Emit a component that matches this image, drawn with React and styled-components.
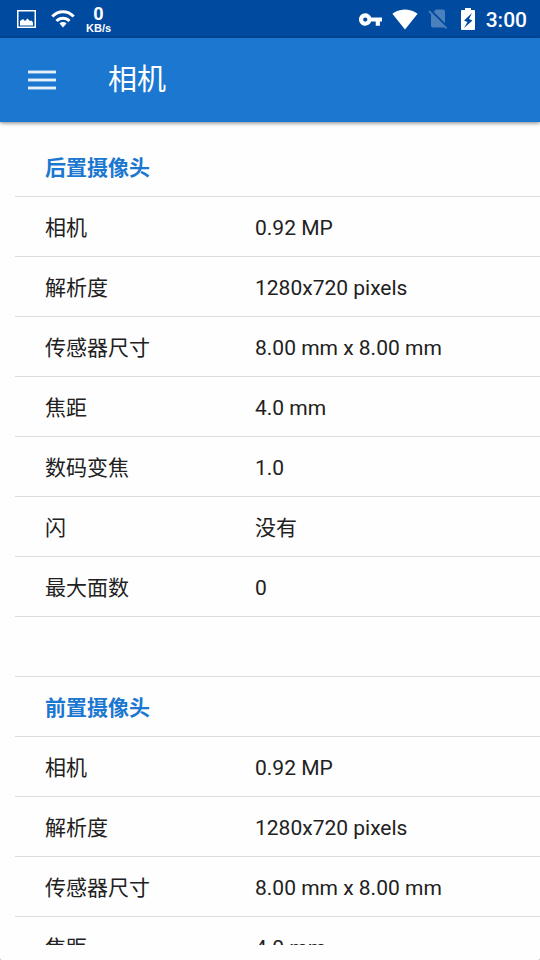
import React from "react";
import styled, { createGlobalStyle } from "styled-components";

const GlobalStyle = createGlobalStyle`
  * { box-sizing: border-box; }
  body {
    margin: 0;
    background: #b5b5b5;
    color: #212121;
    font-family: Roboto, "Noto Sans CJK SC", sans-serif;
  }
`;

const Screen = styled.div`
  display: flex;
  flex-direction: column;
  height: 100vh;
  background: #fefefe;
  border-radius: 0 0 2px 2px;
  overflow: hidden;
`;

const StatusBar = styled.div`
  display: flex;
  flex: none;
  align-items: center;
  justify-content: space-between;
  height: 38px;
  padding: 0 13px 0 17px;
  background: #004a9f;
  color: #fff;
`;

const StatusGroup = styled.div`
  display: flex;
  align-items: center;
  gap: ${(p) => p.$gap}px;
`;

const StatusIcon = styled.svg`
  display: block;
  flex: none;
  fill: ${(p) => (p.$dim ? "#4c80bc" : "#fff")};
`;

const Speed = styled.div`
  display: flex;
  flex-direction: column;
  align-items: center;
  padding-top: 1px;
  font-family: Roboto, sans-serif;
  font-weight: 700;
`;

const SpeedValue = styled.span`
  font-size: 18px;
  line-height: 16px;
`;

const SpeedUnit = styled.span`
  font-family: "Liberation Sans", sans-serif;
  font-size: 11px;
  line-height: 12px;
`;

const Clock = styled.time`
  padding-top: 2px;
  font-size: 21px;
  font-weight: 500;
  line-height: 24px;
`;

const AppBar = styled.header`
  display: flex;
  flex: none;
  align-items: center;
  gap: 52px;
  height: 84px;
  padding: 0 28px;
  background: #1b77d0;
  box-shadow: 0 1px 4px rgba(0, 0, 0, 0.5);
`;

const MenuButton = styled.button`
  display: block;
  padding: 0;
  border: 0;
  background: none;
  cursor: pointer;

  svg {
    display: block;
    fill: #e4effa;
  }
`;

const Title = styled.h1`
  margin: 0;
  color: #fff;
  font-size: 29px;
  font-weight: 400;
  line-height: 44px;
`;

const Main = styled.main`
  display: flex;
  flex: 1;
  flex-direction: column;
  min-height: 0;
  padding: 15px 0 15px 15px;
`;

const Scroller = styled.div`
  flex: 1;
  min-height: 0;
  overflow-y: auto;
  scrollbar-width: none;
`;

const Table = styled.table`
  width: 100%;
  table-layout: fixed;
  border-collapse: separate;
  border-spacing: 0;
  font-size: 21px;
  line-height: 30px;
  text-align: left;
`;

const LabelColumn = styled.col`
  width: 240px;
`;

const Cell = styled.td`
  height: 60px;
  padding: 3px 0 0;
  border-bottom: 1px solid #dcdcdc;
`;

const LabelCell = styled(Cell)`
  padding-left: 30px;
  font-weight: 400;
`;

const SectionCell = styled(LabelCell)`
  color: #1b77d0;
  font-weight: 700;
`;

const specs = [
  ["相机", "0.92 MP"],
  ["解析度", "1280x720 pixels"],
  ["传感器尺寸", "8.00 mm x 8.00 mm"],
  ["焦距", "4.0 mm"],
  ["数码变焦", "1.0"],
  ["闪", "没有"],
  ["最大面数", "0"],
];

const cameras = [
  { name: "后置摄像头", specs },
  { name: "前置摄像头", specs },
];

function CameraSection({ camera, last }) {
  return (
    <tbody>
      <tr>
        <SectionCell as="th" colSpan={2} scope="rowgroup">{camera.name}</SectionCell>
      </tr>
      {camera.specs.map(([label, value]) => (
        <tr key={label}>
          <LabelCell as="th" scope="row">{label}</LabelCell>
          <Cell>{value}</Cell>
        </tr>
      ))}
      {!last && (
        <tr>
          <Cell colSpan={2} />
        </tr>
      )}
    </tbody>
  );
}

export default function App() {
  return (
    <Screen>
      <GlobalStyle />
      <StatusBar>
        <StatusGroup $gap={11}>
          <StatusIcon width="23" height="18" viewBox="0 0 23 18" aria-hidden="true">
            <path fillRule="evenodd" d="M0 0h19v18H0zM1.500 1.500v15h16v-15z" />
            <path d="M3 15.500V11l3-2L8 11l2.500-2.500L13 11l1.500-.5L16 12.500v3z" />
          </StatusIcon>
          <StatusIcon width="24" height="18" viewBox="0 0 24 18" aria-hidden="true">
            <g fill="none" stroke="#fff" strokeWidth="3">
              <path d="M1.300 6.500C7.500.2 16.500.2 22.700 6.500" />
              <path d="M5.500 11c3.800-3.800 9.200-3.800 13 0" />
            </g>
            <path d="M8.500 13.500c2-1.900 5-1.900 7 0L12 17.500z" />
          </StatusIcon>
          <Speed>
            <SpeedValue>0</SpeedValue>
            <SpeedUnit>KB/s</SpeedUnit>
          </Speed>
        </StatusGroup>
        <StatusGroup $gap={10}>
          <StatusIcon width="23" height="13" viewBox="1 6 22 12" aria-hidden="true">
            <path d="M12.650 10C11.830 7.670 9.610 6 7 6c-3.310 0-6 2.690-6 6s2.690 6 6 6c2.610 0 4.830-1.670 5.650-4H17v4h4v-4h2v-4H12.650zM7 14c-1.100 0-2-.9-2-2s.9-2 2-2 2 .9 2 2-.9 2-2 2z" />
          </StatusIcon>
          <StatusIcon width="26" height="21" viewBox="0 3 24 18.500" aria-hidden="true">
            <path d="M12.010 21.490 23.640 7c-.45-.34-4.930-4-11.640-4C5.280 3 .81 6.660.36 7l11.630 14.490.01.01z" />
          </StatusIcon>
          <StatusIcon $dim width="22" height="21" viewBox="2 3 22 20" aria-hidden="true">
            <path d="M18.990 5c0-1.100-.89-2-1.990-2h-7L7.660 5.340 19 16.680zM3.650 3.880 2.380 5.150 5 7.770V19c0 1.100.9 2 2 2h10.010c.35 0 .67-.1.960-.26l1.880 1.880 1.270-1.270z" />
          </StatusIcon>
          <StatusIcon width="16" height="22" viewBox="-1 0 16 22" aria-hidden="true">
            <path fillRule="evenodd" d="M4 0h6v2h3a1 1 0 0 1 1 1v18a1 1 0 0 1-1 1H1a1 1 0 0 1-1-1V3a1 1 0 0 1 1-1h3zM11 5 3 12.500l3.500 1.500L3 20l8.500-7.500L8 11z" />
          </StatusIcon>
          <Clock>3:00</Clock>
        </StatusGroup>
      </StatusBar>
      <AppBar>
        <MenuButton type="button" aria-label="菜单">
          <svg width="28" height="20" viewBox="0 0 28 20" aria-hidden="true">
            <path d="M0 0h28v4H0zM0 8h28v4H0zM0 16h28v4H0z" opacity=".45" />
            <path d="M0 1h28v2H0zM0 9h28v2H0zM0 17h28v2H0z" />
          </svg>
        </MenuButton>
        <Title>相机</Title>
      </AppBar>
      <Main>
        <Scroller>
          <Table>
            <colgroup>
              <LabelColumn />
              <col />
            </colgroup>
            {cameras.map((camera, i) => (
              <CameraSection key={camera.name} camera={camera} last={i === cameras.length - 1} />
            ))}
          </Table>
        </Scroller>
      </Main>
    </Screen>
  );
}
